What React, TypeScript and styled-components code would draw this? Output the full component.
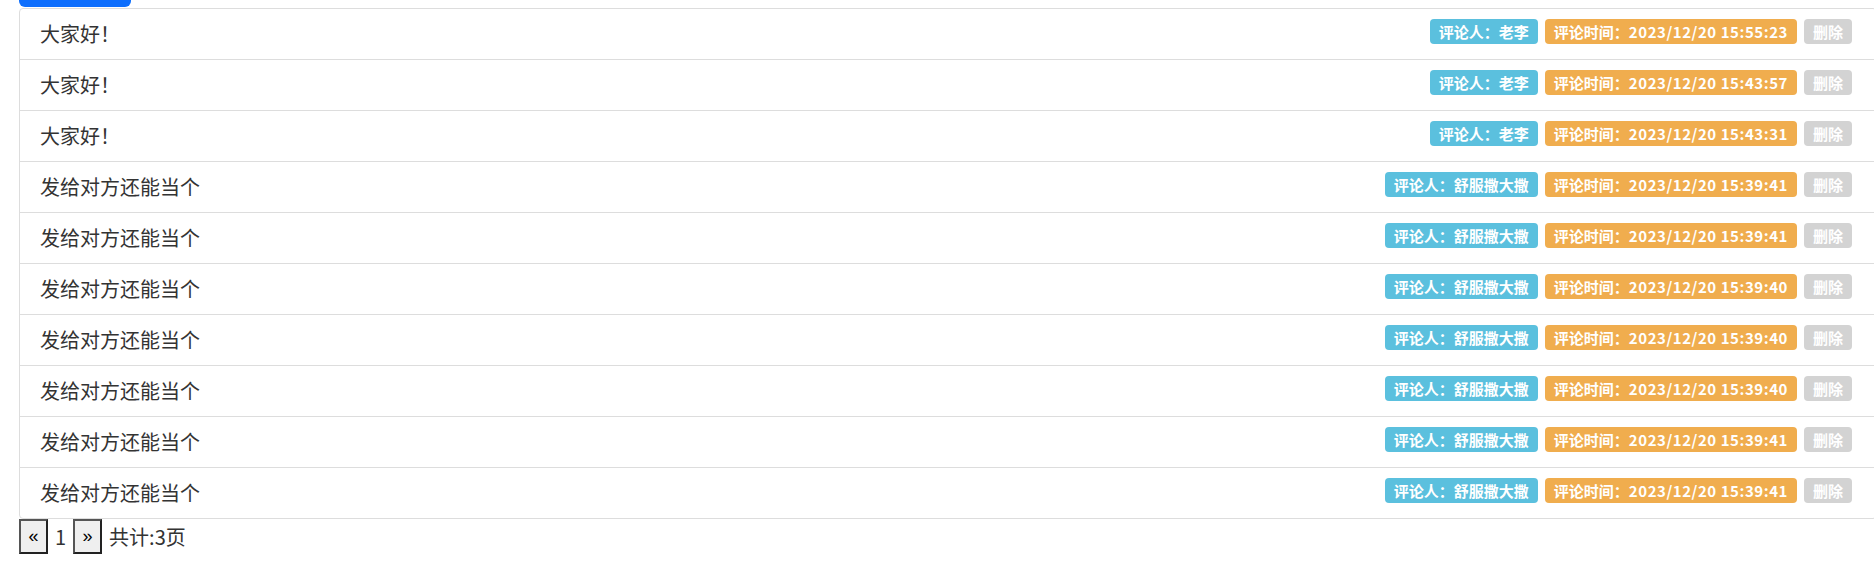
import React from "react";
import styled, { createGlobalStyle } from "styled-components";

const GlobalStyle = createGlobalStyle`
  html, body { margin: 0; padding: 0; background: #fff; }
  body {
    font-family: "Noto Sans CJK SC", "Noto Sans", "Liberation Sans", sans-serif;
    color: #333;
    overflow: hidden;
  }
`;

const Page = styled.div`
  padding-left: 19px;
  overflow: hidden;
  width: 1874px;
  box-sizing: border-box;
`;

const TopButton = styled.div`
  width: 112px;
  height: 7px;
  background: #0d6efd;
  border-radius: 0 0 6px 6px;
  margin-bottom: 1px;
`;

const List = styled.ul`
  list-style: none;
  margin: 0;
  padding: 0;
  width: 1858px;
`;

const Item = styled.li`
  display: flex;
  justify-content: space-between;
  align-items: flex-start;
  padding: 10px 24px 10px 20px;
  margin-bottom: -1px;
  border: 1px solid #ddd;
  background: #fff;
  font-size: 20px;
  line-height: 30px;
  height: 30px;
  &:first-child { border-radius: 4px 4px 0 0; }
  &:last-child { border-radius: 0 0 4px 4px; margin-bottom: 0; }
`;

const Content = styled.span`
  color: #333;
`;

const Tags = styled.div`
  display: flex;
  gap: 7px;
  align-items: flex-start;
`;

const Label = styled.span<{ $tone: "info" | "warning" | "muted" }>`
  display: inline-block;
  height: 25px;
  line-height: 25px;
  padding: 0 9px;
  border-radius: 4px;
  font-size: 15px;
  font-weight: 700;
  color: #fff;
  background: ${(p) =>
    p.$tone === "info" ? "#5bc0de" : p.$tone === "warning" ? "#f0ad4e" : "#d3d3d3"};
  white-space: nowrap;
`;

const Digits = styled.span`
  letter-spacing: 0.55px;
`;

const Pager = styled.div`
  display: flex;
  align-items: center;
  gap: 7px;
  font-size: 20px;
  line-height: 30px;
  color: #333;
`;

const PageButton = styled.button`
  width: 29px;
  height: 35px;
  padding: 0;
  box-sizing: border-box;
  background: #efefef;
  border: 2px solid;
  border-color: #555 #222 #222 #555;
  font-family: "Liberation Sans", sans-serif;
  font-size: 18px;
  color: #000;
  display: flex;
  align-items: center;
  justify-content: center;
`;

const comments = [
  { text: "大家好！", user: "老李", time: "2023/12/20 15:55:23" },
  { text: "大家好！", user: "老李", time: "2023/12/20 15:43:57" },
  { text: "大家好！", user: "老李", time: "2023/12/20 15:43:31" },
  { text: "发给对方还能当个", user: "舒服撒大撒", time: "2023/12/20 15:39:41" },
  { text: "发给对方还能当个", user: "舒服撒大撒", time: "2023/12/20 15:39:41" },
  { text: "发给对方还能当个", user: "舒服撒大撒", time: "2023/12/20 15:39:40" },
  { text: "发给对方还能当个", user: "舒服撒大撒", time: "2023/12/20 15:39:40" },
  { text: "发给对方还能当个", user: "舒服撒大撒", time: "2023/12/20 15:39:40" },
  { text: "发给对方还能当个", user: "舒服撒大撒", time: "2023/12/20 15:39:41" },
  { text: "发给对方还能当个", user: "舒服撒大撒", time: "2023/12/20 15:39:41" },
];

export default function App() {
  return (
    <Page>
      <GlobalStyle />
      <TopButton />
      <List>
        {comments.map((c, i) => (
          <Item key={i}>
            <Content>{c.text}</Content>
            <Tags>
              <Label $tone="info">评论人：{c.user}</Label>
              <Label $tone="warning">
                评论时间：<Digits>{c.time}</Digits>
              </Label>
              <Label $tone="muted">删除</Label>
            </Tags>
          </Item>
        ))}
      </List>
      <Pager>
        <PageButton>«</PageButton>
        <span>1</span>
        <PageButton>»</PageButton>
        <span>共计:3页</span>
      </Pager>
    </Page>
  );
}
